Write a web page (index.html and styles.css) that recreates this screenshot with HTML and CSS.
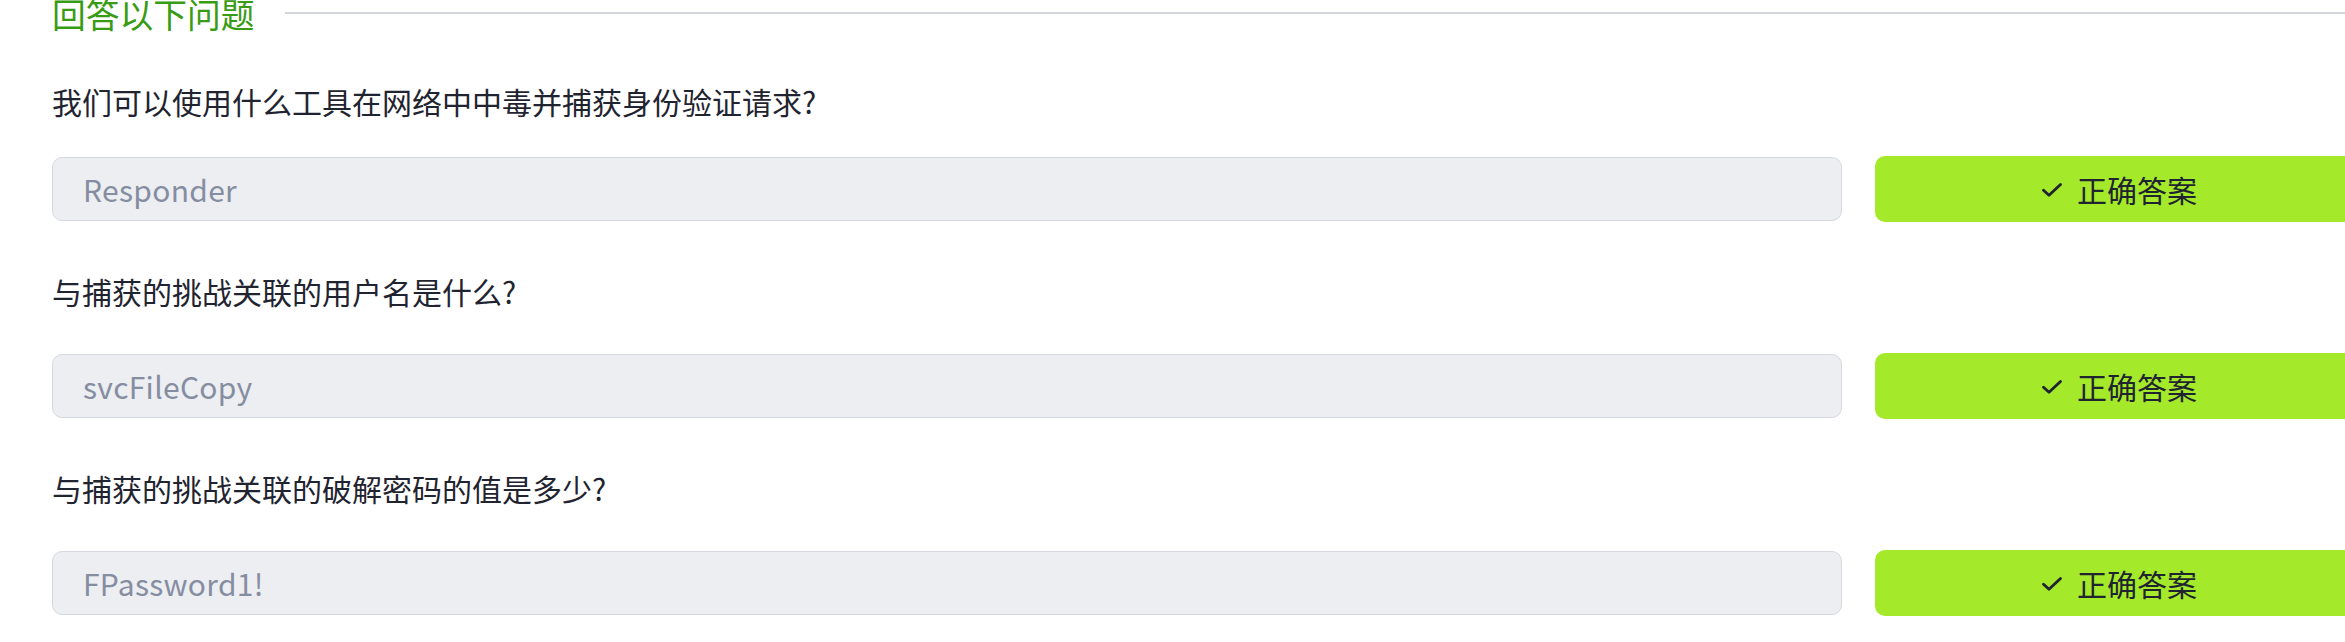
FILE: index.html
```html
<!DOCTYPE html>
<html lang="zh-CN">
<head>
<meta charset="utf-8">
<title>回答以下问题</title>
<link rel="stylesheet" href="styles.css">
</head>
<body>
<div class="panel">
  <div class="header">
    <h2 class="title">回答以下问题</h2>
    <div class="rule"></div>
  </div>

  <div class="qa-block qa-first">
    <p class="question">我们可以使用什么工具在网络中中毒并捕获身份验证请求?</p>
    <div class="answer-row">
      <div class="answer-input">Responder</div>
      <button class="answer-btn" type="button">
        <svg class="check" width="20" height="14" viewBox="0 0 20 14"><path d="M1.5 7.2 L7 12.3 L18.5 1.5" fill="none" stroke="#1f2430" stroke-width="2.8" stroke-linecap="round" stroke-linejoin="round"/></svg>
        <span>正确答案</span>
      </button>
    </div>
  </div>

  <div class="qa-block">
    <p class="question">与捕获的挑战关联的用户名是什么?</p>
    <div class="answer-row">
      <div class="answer-input">svcFileCopy</div>
      <button class="answer-btn" type="button">
        <svg class="check" width="20" height="14" viewBox="0 0 20 14"><path d="M1.5 7.2 L7 12.3 L18.5 1.5" fill="none" stroke="#1f2430" stroke-width="2.8" stroke-linecap="round" stroke-linejoin="round"/></svg>
        <span>正确答案</span>
      </button>
    </div>
  </div>

  <div class="qa-block">
    <p class="question">与捕获的挑战关联的破解密码的值是多少?</p>
    <div class="answer-row">
      <div class="answer-input">FPassword1!</div>
      <button class="answer-btn" type="button">
        <svg class="check" width="20" height="14" viewBox="0 0 20 14"><path d="M1.5 7.2 L7 12.3 L18.5 1.5" fill="none" stroke="#1f2430" stroke-width="2.8" stroke-linecap="round" stroke-linejoin="round"/></svg>
        <span>正确答案</span>
      </button>
    </div>
  </div>
</div>
</body>
</html>
```

FILE: styles.css
```css
html, body {
  margin: 0;
  padding: 0;
  background: #ffffff;
  overflow: hidden;
}

body {
  font-family: "Noto Sans CJK SC", "Noto Sans", sans-serif;
  color: #1f2430;
}

.panel {
  width: 2312px;
  padding-left: 52px;
}

.header {
  display: flex;
  align-items: center;
  margin-top: -3px;
  height: 34px;
}

.title {
  margin: 0;
  font-size: 33.75px;
  line-height: 34px;
  font-weight: 400;
  color: #389b14;
  white-space: nowrap;
}

.rule {
  flex: 1;
  height: 2px;
  margin-left: 30px;
  margin-top: -3px;
  background: #d3d7dc;
}

.qa-block {
  margin-top: 47px;
}

.question {
  margin: 0 0 39px 0;
  font-size: 30px;
  line-height: 45px;
  color: #1f2430;
}

.qa-first {
  margin-top: 48px;
}

.qa-first .question {
  margin-bottom: 32px;
}

.answer-row {
  display: flex;
  align-items: center;
  gap: 33px;
  height: 66px;
}

.answer-input {
  box-sizing: border-box;
  width: 1790px;
  height: 64px;
  flex: none;
  display: flex;
  align-items: center;
  padding: 0 30px;
  background: #edeef2;
  border: 1px solid #d5d9df;
  border-radius: 10px;
  font-size: 30px;
  letter-spacing: 0.3px;
  color: #858da1;
}

.answer-btn {
  flex: none;
  box-sizing: border-box;
  width: 489px;
  height: 66px;
  display: flex;
  align-items: center;
  justify-content: center;
  gap: 15px;
  margin: 0;
  padding: 0;
  border: none;
  border-radius: 10px;
  background: #a4ea2a;
  font-family: "Noto Sans CJK SC", "Noto Sans", sans-serif;
  font-size: 30px;
  color: #1f2430;
}

.check {
  display: block;
  margin-top: 2px;
}
```
